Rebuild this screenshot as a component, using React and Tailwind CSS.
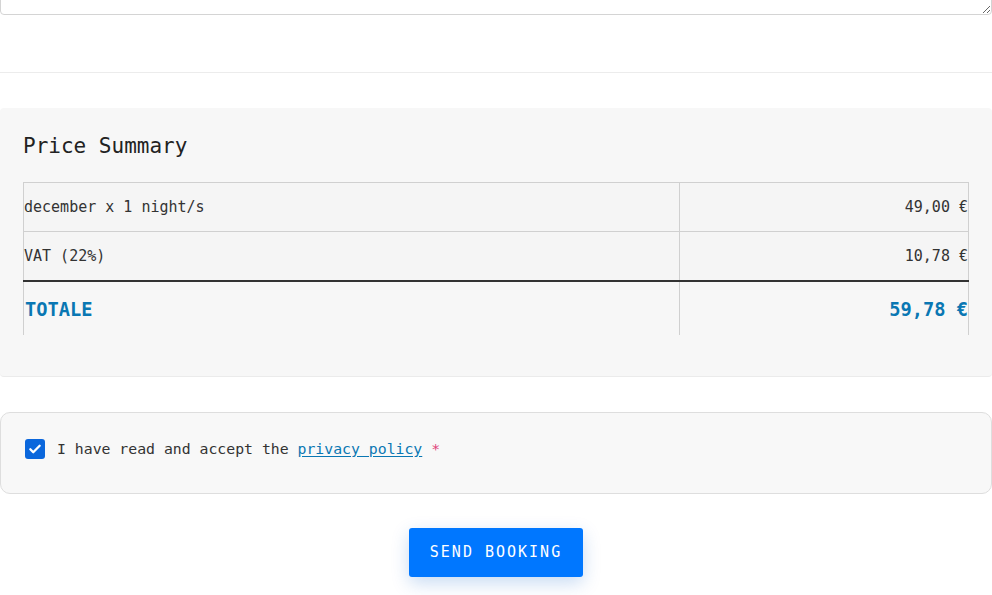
import React from 'react';

const mono = { fontFamily: '"DejaVu Sans Mono", "Liberation Mono", monospace' };

export default function App() {
    const righe = [
        ['december x 1 night/s', '49,00 €'],
        ['VAT (22%)', '10,78 €'],
    ];

    return (
        <div className="w-[992px] bg-white text-[#333]" style={mono}>
            {/* textarea note (scrollata in alto) */}
            <div className="h-[15px] overflow-hidden flex flex-col justify-end">
                <textarea className="block w-full h-[80px] shrink-0 border border-[#d4d4d4] rounded-[4px] bg-white" defaultValue="" />
            </div>

            <div className="h-[57px]" />
            <div className="border-t border-[#ececec]" />
            <div className="h-[35px]" />

            {/* Riepilogo prezzi */}
            <div className="bg-[#f7f7f7] rounded-[4px] border-b border-[#ebebeb] px-[23px] pt-[24px] pb-[41px]">
                <h3 className="text-[21px] leading-[28px] font-normal text-[#222] mb-[22px]">Price Summary</h3>
                <table className="w-full border-collapse text-[15px]">
                    <tbody>
                        {righe.map(([l, v]) => (
                            <tr key={l} className="bg-[#f5f5f5]">
                                <td className="border border-[#d0d0d0] h-[49px] px-0 py-0 align-middle">{l}</td>
                                <td className="border border-[#d0d0d0] w-[289px] h-[49px] px-0 py-0 text-right align-middle">{v}</td>
                            </tr>
                        ))}
                        <tr className="text-[#0a77b3] font-bold text-[18.7px]">
                            <td className="border-l border-r border-[#d0d0d0] border-t-2 border-t-[#333] h-[54px] px-0 pl-[1px] pt-[4px] pb-0 align-middle">TOTALE</td>
                            <td className="border-r border-[#d0d0d0] border-t-2 border-t-[#333] h-[54px] px-0 pt-[4px] pb-0 text-right align-middle">59,78 €</td>
                        </tr>
                    </tbody>
                </table>
            </div>

            <div className="h-[35px]" />

            {/* Privacy */}
            <div className="bg-[#f8f8f8] border border-[#dedede] rounded-[10px] h-[82px] px-[24px] pt-[26px] flex items-start gap-[12px] text-[14.8px]">
                <span className="w-[20px] h-[20px] rounded-[3px] bg-[#0b67dc] flex items-center justify-center shrink-0">
                    <svg width="14" height="14" viewBox="0 0 24 24" fill="none" stroke="white" strokeWidth="4" strokeLinecap="round" strokeLinejoin="round">
                        <path d="M4 12.5l5 5L20 6.5" />
                    </svg>
                </span>
                <span className="leading-[20px]">
                    I have read and accept the{' '}
                    <a href="#" className="text-[#0a77b3] underline underline-offset-2">privacy policy</a>{' '}
                    <span className="text-[#e0457b]">*</span>
                </span>
            </div>

            {/* Invio */}
            <div className="flex justify-center pt-[34px] pb-[19px]">
                <button className="w-[174px] h-[49px] bg-[#0077ff] text-white text-[15px] tracking-[2px] rounded-[3px] shadow-[0_6px_18px_rgba(0,90,200,0.22)]">
                    SEND BOOKING
                </button>
            </div>
        </div>
    );
}
